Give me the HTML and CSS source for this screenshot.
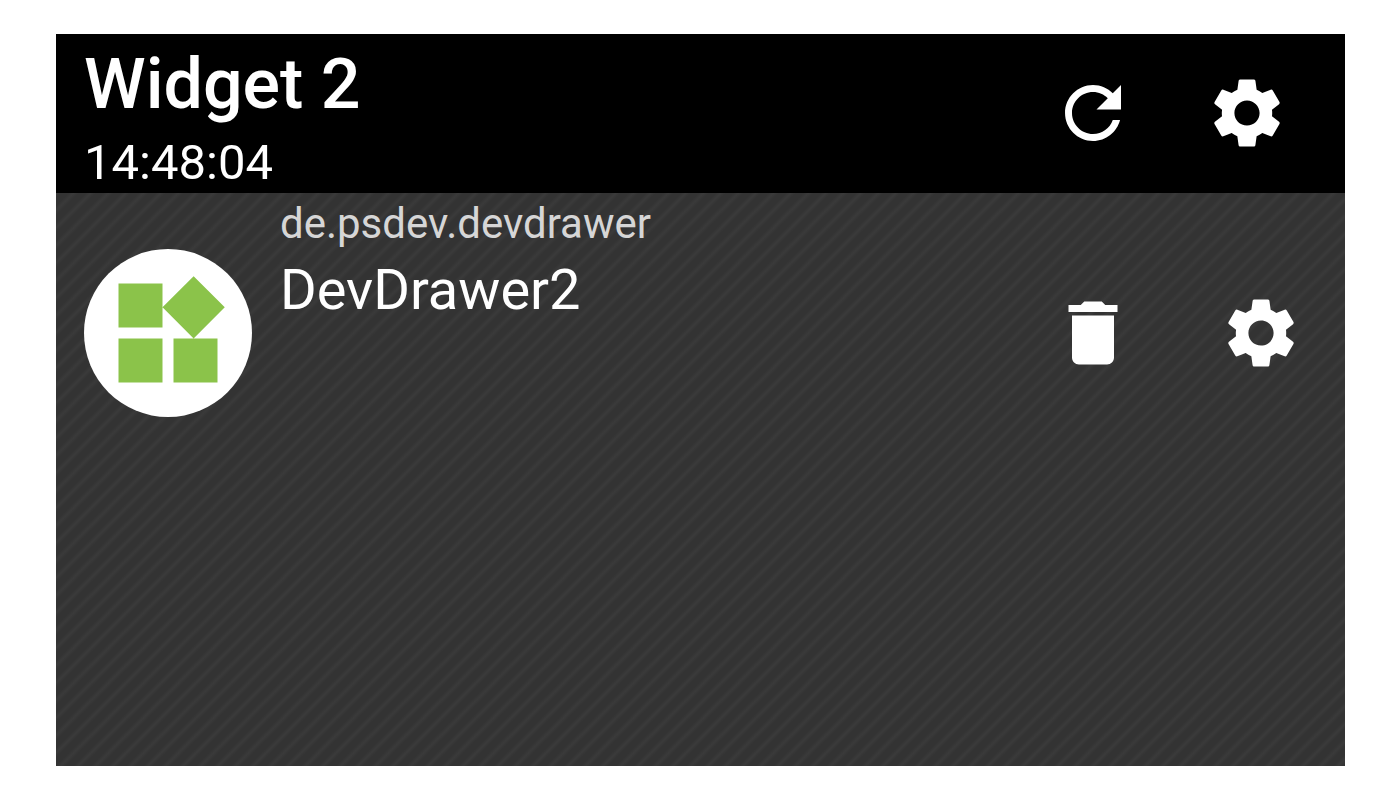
FILE: index.html
```
<!DOCTYPE html>
<html lang="en">
<head>
<meta charset="utf-8">
<meta name="viewport" content="width=device-width, initial-scale=1">
<title>Widget 2</title>
<link rel="stylesheet" href="styles.css">
</head>
<body>
<main class="widget">
  <header class="widget-header">
    <div class="heading">
      <h1 class="title">Widget 2</h1>
      <time class="updated">14:48:04</time>
    </div>
    <div class="actions actions-header">
      <button class="icon-button" type="button" aria-label="Refresh">
        <svg class="icon" viewBox="0 0 24 24" aria-hidden="true"><path d="M17.65 6.35C16.2 4.9 14.21 4 12 4c-4.42 0-7.99 3.58-7.99 8s3.57 8 7.99 8c3.73 0 6.84-2.55 7.73-6h-2.08c-.82 2.33-3.04 4-5.65 4-3.31 0-6-2.69-6-6s2.69-6 6-6c1.66 0 3.14.69 4.22 1.78L13 11h7V4l-2.350 2.350z"/></svg>
      </button>
      <button class="icon-button" type="button" aria-label="Widget settings">
        <svg class="icon" viewBox="0 0 24 24" aria-hidden="true"><path d="M19.140 12.940c.04-.3.06-.61.06-.94 0-.32-.02-.64-.07-.94l2.030-1.580c.18-.14.23-.41.12-.61l-1.920-3.320c-.12-.22-.37-.29-.59-.22l-2.390.96c-.5-.38-1.030-.7-1.620-.94l-.36-2.540c-.04-.24-.24-.41-.48-.41h-3.840c-.24 0-.43.17-.47.41l-.36 2.540c-.59.24-1.130.57-1.620.94l-2.390-.96c-.22-.08-.47 0-.59.22L2.740 8.870c-.12.21-.08.47.12.61l2.030 1.580c-.05.3-.09.63-.09.94s.02.64.07.94l-2.030 1.580c-.18.14-.23.41-.12.61l1.920 3.320c.12.22.37.29.59.22l2.390-.96c.5.38 1.030.7 1.620.94l.36 2.540c.05.24.24.41.48.41h3.840c.24 0 .44-.17.47-.41l.36-2.540c.59-.24 1.130-.56 1.620-.94l2.390.96c.22.08.47 0 .59-.22l1.920-3.320c.12-.22.07-.47-.12-.61l-2.010-1.580zM12 15.600c-1.980 0-3.600-1.620-3.600-3.600s1.620-3.600 3.600-3.600 3.600 1.620 3.600 3.600-1.620 3.600-3.600 3.600z"/></svg>
      </button>
    </div>
  </header>
  <ul class="app-list">
    <li class="app">
      <svg class="app-icon" viewBox="0 0 168 168" aria-hidden="true">
        <circle cx="84" cy="84" r="84" fill="#fff"/>
        <path transform="translate(18 18) scale(5.500)" fill="#8bc34a" d="M13 13v8h8v-8zM3 21h8v-8H3zM3 3v8h8V3zM16.660 1.690L11 7.340 16.660 13l5.660-5.660z"/>
      </svg>
      <div class="app-text">
        <span class="package">de.psdev.devdrawer</span>
        <span class="name">DevDrawer2</span>
      </div>
      <div class="actions actions-app">
        <button class="icon-button" type="button" aria-label="Uninstall DevDrawer2">
          <svg class="icon" viewBox="0 0 24 24" aria-hidden="true"><path d="M6 19c0 1.100.9 2 2 2h8c1.100 0 2-.9 2-2V7H6v12zM19 4h-3.500l-1-1h-5l-1 1H5v2h14V4z"/></svg>
        </button>
        <button class="icon-button" type="button" aria-label="DevDrawer2 settings">
          <svg class="icon" viewBox="0 0 24 24" aria-hidden="true"><path d="M19.140 12.940c.04-.3.06-.61.06-.94 0-.32-.02-.64-.07-.94l2.030-1.580c.18-.14.23-.41.12-.61l-1.920-3.320c-.12-.22-.37-.29-.59-.22l-2.390.96c-.5-.38-1.030-.7-1.620-.94l-.36-2.540c-.04-.24-.24-.41-.48-.41h-3.840c-.24 0-.43.17-.47.41l-.36 2.540c-.59.24-1.130.57-1.620.94l-2.390-.96c-.22-.08-.47 0-.59.22L2.740 8.870c-.12.21-.08.47.12.61l2.030 1.580c-.05.3-.09.63-.09.94s.02.64.07.94l-2.030 1.580c-.18.14-.23.41-.12.61l1.920 3.320c.12.22.37.29.59.22l2.390-.96c.5.38 1.030.7 1.620.94l.36 2.540c.05.24.24.41.48.41h3.840c.24 0 .44-.17.47-.41l.36-2.540c.59-.24 1.130-.56 1.620-.94l2.390.96c.22.08.47 0 .59-.22l1.920-3.320c.12-.22.07-.47-.12-.61l-2.010-1.580zM12 15.600c-1.980 0-3.600-1.620-3.600-3.600s1.620-3.600 3.600-3.600 3.600 1.620 3.600 3.600-1.620 3.600-3.600 3.600z"/></svg>
        </button>
      </div>
    </li>
  </ul>
</main>
</body>
</html>
```

FILE: styles.css
```
* {
  box-sizing: border-box;
}

body {
  display: flex;
  min-height: 100vh;
  margin: 0;
  padding: 34px 55px 34px 56px;
  background: #fff;
  color: #fff;
  font-family: Roboto, "Noto Sans", sans-serif;
}

.widget {
  display: flex;
  flex: 1;
  flex-direction: column;
  min-width: 0;
  background: #333;
}

.widget-header {
  display: flex;
  align-items: center;
  justify-content: space-between;
  padding: 0 56px 0 28px;
  background: #000;
}

.heading {
  display: flex;
  flex-direction: column;
  gap: 8px;
  padding-top: 9px;
}

.title {
  margin: 0;
  font-size: 70px;
  font-weight: 500;
  line-height: 82px;
}

.updated {
  font-size: 49px;
  line-height: 60px;
}

.actions {
  display: flex;
  align-items: center;
}

.actions-header {
  gap: 70px;
  padding-bottom: 2px;
}

.actions-app {
  gap: 84px;
}

.icon-button {
  display: flex;
  padding: 0;
  border: 0;
  background: none;
  color: inherit;
  cursor: pointer;
}

.icon {
  width: 84px;
  height: 84px;
  fill: currentColor;
}

/* Diagonal hatching: a 35px tile holds four soft stripes along its diagonal. */
.app-list {
  flex: 1;
  margin: 0;
  padding: 0;
  list-style: none;
  background: repeating-linear-gradient(135deg, #3a3a3a 0, #333 7% 18%, #3a3a3a 25%) 0 0 / 35px 35px;
}

.app {
  display: flex;
  align-items: center;
  gap: 28px;
  min-height: 280px;
  padding: 0 42px 0 28px;
}

.app-icon {
  flex: none;
  width: 168px;
  height: 168px;
}

.app-text {
  display: flex;
  flex: 1;
  flex-direction: column;
  align-self: flex-start;
  gap: 8px;
  padding-top: 6px;
}

.package {
  color: #d6d6d6;
  font-size: 42px;
  line-height: 50px;
}

.name {
  font-size: 56px;
  line-height: 66px;
}
```
